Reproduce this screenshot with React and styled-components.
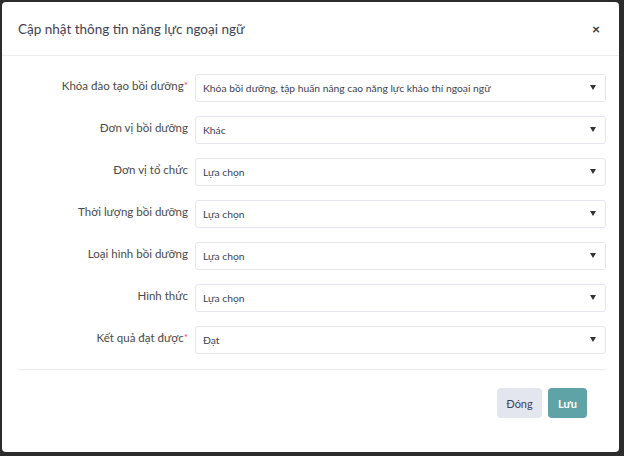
import React from 'react';
import styled, { createGlobalStyle } from 'styled-components';

const GlobalStyle = createGlobalStyle`
  html, body {
    margin: 0;
    padding: 0;
    background: #2c2c2c;
    font-family: Lato, "Open Sans", "Liberation Sans", sans-serif;
  }
`;

const Backdrop = styled.div`
  width: 624px;
  height: 456px;
  padding: 2px 5px 4px 2px;
  box-sizing: border-box;
  background: #2c2c2c;
`;

const Modal = styled.div`
  width: 617px;
  height: 450px;
  background: #fff;
  border-radius: 4px;
  display: flex;
  flex-direction: column;
  box-sizing: border-box;
`;

const Header = styled.div`
  height: 54px;
  display: flex;
  align-items: center;
  justify-content: space-between;
  padding: 0 19px 0 16px;
  border-bottom: 1px solid #ececec;
  box-sizing: border-box;
`;

const Title = styled.h3`
  margin: 0;
  font-size: 13.5px;
  font-weight: 400;
  color: #3f4254;
`;

const Close = styled.span`
  font-size: 14px;
  color: #333;
  font-weight: 700;
  line-height: 1;
`;

const Body = styled.div`
  padding: 18px 13px 0 16px;
  display: flex;
  flex-direction: column;
  gap: 14px;
`;

const Row = styled.div`
  display: grid;
  grid-template-columns: 170px 1fr;
  column-gap: 7px;
  align-items: center;
`;

const Label = styled.label`
  text-align: right;
  font-size: 11.5px;
  color: #4a4a4a;
  padding-bottom: 5px;
`;

const Req = styled.span`
  color: #f1416c;
  font-size: 10px;
  vertical-align: top;
`;

const Select = styled.div`
  height: 28px;
  border: 1px solid #e4e6ef;
  border-radius: 3px;
  display: flex;
  align-items: center;
  justify-content: space-between;
  padding: 0 9px 1px 7px;
  box-sizing: border-box;
  font-size: 10.3px;
  color: #3f4254;
`;

const Caret = styled.span`
  width: 0;
  height: 0;
  border-left: 3px solid transparent;
  border-right: 3px solid transparent;
  border-top: 5px solid #333;
`;

const Divider = styled.div`
  margin: 15px 13px 0 16px;
  border-top: 1px solid #ececec;
`;

const Footer = styled.div`
  display: flex;
  justify-content: flex-end;
  gap: 6px;
  padding: 18px 32px 0 0;
`;

const Button = styled.button`
  height: 30px;
  min-width: ${(p) => (p.$primary ? '39px' : '45px')};
  padding: 0 8px;
  border: none;
  border-radius: 4px;
  font-family: inherit;
  font-size: 11px;
  font-weight: ${(p) => (p.$primary ? 700 : 400)};
  color: ${(p) => (p.$primary ? '#fff' : '#3f4254')};
  background: ${(p) => (p.$primary ? '#5fa3a6' : '#e4e6ef')};
`;

const fields = [
  { label: 'Khóa đào tạo bồi dưỡng', required: true, value: 'Khóa bồi dưỡng, tập huấn nâng cao năng lực khảo thí ngoại ngữ' },
  { label: 'Đơn vị bồi dưỡng', value: 'Khác' },
  { label: 'Đơn vị tổ chức', value: 'Lựa chọn' },
  { label: 'Thời lượng bồi dưỡng', value: 'Lựa chọn' },
  { label: 'Loại hình bồi dưỡng', value: 'Lựa chọn' },
  { label: 'Hình thức', value: 'Lựa chọn' },
  { label: 'Kết quả đạt được', required: true, value: 'Đạt' },
];

export default function App() {
  return (
    <Backdrop>
      <GlobalStyle />
      <Modal>
        <Header>
          <Title>Cập nhật thông tin năng lực ngoại ngữ</Title>
          <Close>×</Close>
        </Header>
        <Body>
          {fields.map((f) => (
            <Row key={f.label}>
              <Label>
                {f.label}
                {f.required && <Req>*</Req>}
              </Label>
              <Select>
                <span>{f.value}</span>
                <Caret />
              </Select>
            </Row>
          ))}
        </Body>
        <Divider />
        <Footer>
          <Button>Đóng</Button>
          <Button $primary>Lưu</Button>
        </Footer>
      </Modal>
    </Backdrop>
  );
}
